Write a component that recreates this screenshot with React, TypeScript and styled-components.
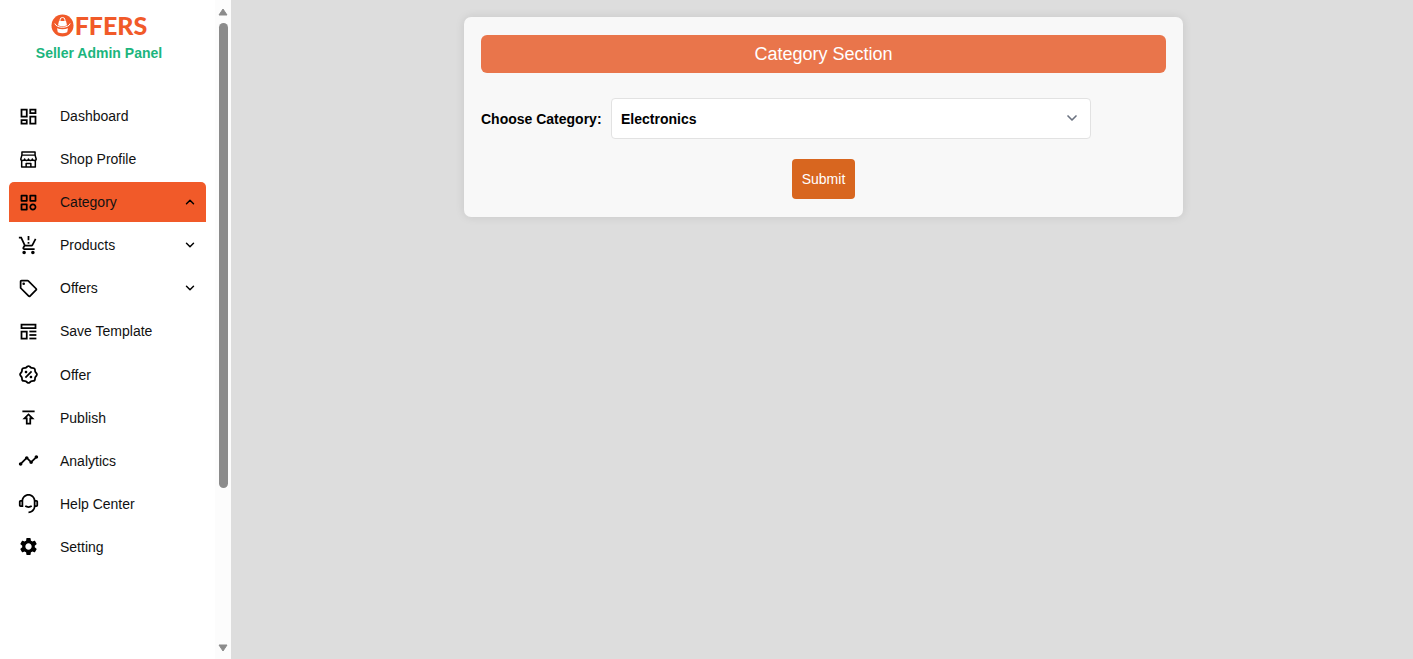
import React from "react";
import styled, { createGlobalStyle } from "styled-components";
import {
  MdOutlineDashboard,
  MdOutlineLocalOffer,
  MdOutlinePublish,
  MdProductionQuantityLimits,
  MdSettings,
  MdTimeline,
} from "react-icons/md";
import { BiCategory } from "react-icons/bi";
import { CgTemplate } from "react-icons/cg";
import { RiCustomerService2Line, RiDiscountPercentLine } from "react-icons/ri";
import { ChevronDown, ChevronUp } from "lucide-react";

const GlobalStyle = createGlobalStyle`
  *, *::before, *::after { box-sizing: border-box; }
  body {
    margin: 0;
    background: #dddddd;
    color: #111111;
    font-family: "Liberation Sans", Arial, sans-serif;
    font-size: 14px;
  }
  button, select { font: inherit; }
`;

const Layout = styled.div`
  display: flex;
  min-height: 100vh;
`;

const Sidebar = styled.aside`
  display: flex;
  flex: 0 0 231px;
  height: 100vh;
  background: #ffffff;
`;

const SidebarContent = styled.div`
  flex: 1;
  padding: 13px 9px 0;
`;

const Brand = styled.header`
  display: flex;
  flex-direction: column;
  align-items: center;
  padding-right: 17px;
  margin-bottom: 34px;
`;

const Logo = styled.div`
  display: flex;
  align-items: center;
  gap: 1px;
  height: 25px;
  color: #f15a29;
  font: 900 25px/25px Lato, sans-serif;
`;

const BrandTitle = styled.h1`
  margin: 6px 0 0;
  color: #1bb57d;
  font-size: 14px;
  line-height: 18px;
`;

const Menu = styled.ul`
  display: flex;
  flex-direction: column;
  justify-content: space-between;
  min-height: 471px;
  margin: 0;
  padding: 0;
  list-style: none;
`;

const MenuLink = styled.a<{ $active?: boolean }>`
  display: flex;
  align-items: center;
  gap: 21px;
  height: 40px;
  padding: 0 9px;
  border-radius: 5px 5px 0 0;
  background: ${({ $active }) => ($active ? "#f15a29" : "transparent")};
  color: inherit;
  text-decoration: none;

  svg {
    flex: none;
    color: #000000;
  }
`;

const MenuLabel = styled.span`
  flex: 1;
`;

const ScrollBar = styled.div`
  display: flex;
  flex-direction: column;
  align-items: center;
  flex: 0 0 16px;
  padding: 8px 0 7px;
  background: #fcfcfc;
`;

const ScrollTrack = styled.div`
  flex: 1;
  width: 9px;
  margin: 7px 0 5px;
`;

const ScrollThumb = styled.div`
  height: 75.5%;
  border-radius: 5px;
  background: #8b8b8b;
`;

const Main = styled.main`
  flex: 1;
  min-width: 0;
  padding: 17px 16px 17px 19px;
`;

const Card = styled.form`
  display: flex;
  flex-direction: column;
  max-width: 719px;
  margin: 0 auto;
  padding: 18px 17px;
  border-radius: 7px;
  background: #f8f8f8;
  box-shadow: 0 0 10px rgba(0, 0, 0, 0.1);
`;

const CardTitle = styled.h2`
  margin: 0 0 25px;
  border-radius: 6px;
  background: #e9754b;
  color: #ffffff;
  font-size: 18px;
  font-weight: 400;
  line-height: 38px;
  text-align: center;
`;

const Field = styled.div`
  display: flex;
  align-items: center;
  margin-bottom: 20px;
`;

const FieldLabel = styled.label`
  flex: 0 0 130px;
  color: #000000;
  font-weight: 700;
`;

const SelectBox = styled.div`
  position: relative;
  width: 70%;

  svg {
    position: absolute;
    top: 12px;
    right: 11px;
    color: #6b7280;
    pointer-events: none;
  }
`;

const Select = styled.select`
  width: 100%;
  height: 41px;
  padding: 0 9px;
  border: 1px solid #e2e2e2;
  border-radius: 4px;
  background: #ffffff;
  color: #000000;
  font-weight: 700;
  appearance: none;
`;

const SubmitButton = styled.button`
  align-self: center;
  height: 40px;
  padding: 0 10px;
  border: 0;
  border-radius: 4px;
  background: #d8661f;
  color: #ffffff;
`;

function LogoMark() {
  return (
    <svg width="23" height="23" viewBox="0 0 23 23" aria-hidden="true">
      <circle cx="11.5" cy="11.5" r="11" fill="currentColor" />
      <path d="M9 7V6a2.500 2.500 0 0 1 5 0v1" fill="none" stroke="#fff" />
      <path d="M8 7h7l1 4.200c-2.800 1.300-6.200 1.300-9 0z" fill="#fff" />
      <path d="M3.800 9.500c1.600 5 13.800 5 15.400 0" fill="none" stroke="#fff" />
      <path d="M6 14.200c3.400 1.400 7.600 1.400 11 0l-.8 4c-3 1.300-6.400 1.300-9.400 0z" fill="#fff" />
    </svg>
  );
}

function ShopIcon({ size = 22 }: { size?: number }) {
  return (
    <svg
      width={size}
      height={size}
      viewBox="0 0 24 24"
      fill="none"
      stroke="currentColor"
      strokeWidth="1.7"
      strokeLinejoin="round"
    >
      <path d="M4.500 3.500h15v3.500h-15z" />
      <path d="M4.500 7L3.200 11.500c0 2.200 4.400 2.200 4.400 0c0 2.200 4.400 2.200 4.400 0c0 2.200 4.400 2.200 4.400 0c0 2.200 4.400 2.200 4.400 0L19.500 7" />
      <path d="M4.200 13v7.500h15.600v-7.500M9.300 20.500v-4h5.400v4" />
    </svg>
  );
}

const menuItems = [
  { label: "Dashboard", Icon: MdOutlineDashboard },
  { label: "Shop Profile", Icon: ShopIcon },
  { label: "Category", Icon: BiCategory, Arrow: ChevronUp, active: true },
  { label: "Products", Icon: MdProductionQuantityLimits, Arrow: ChevronDown },
  { label: "Offers", Icon: MdOutlineLocalOffer, Arrow: ChevronDown },
  { label: "Save Template", Icon: CgTemplate },
  { label: "Offer", Icon: RiDiscountPercentLine },
  { label: "Publish", Icon: MdOutlinePublish },
  { label: "Analytics", Icon: MdTimeline },
  { label: "Help Center", Icon: RiCustomerService2Line },
  { label: "Setting", Icon: MdSettings },
];

export default function App() {
  return (
    <Layout>
      <GlobalStyle />
      <Sidebar>
        <SidebarContent>
          <Brand>
            <Logo>
              <LogoMark />
              <span>FFERS</span>
            </Logo>
            <BrandTitle>Seller Admin Panel</BrandTitle>
          </Brand>
          <nav>
            <Menu>
              {menuItems.map(({ label, Icon, Arrow, active }) => (
                <li key={label}>
                  <MenuLink href="#" $active={active}>
                    <Icon size={21} />
                    <MenuLabel>{label}</MenuLabel>
                    {Arrow && <Arrow size={14} strokeWidth={2.500} />}
                  </MenuLink>
                </li>
              ))}
            </Menu>
          </nav>
        </SidebarContent>
        <ScrollBar aria-hidden="true">
          <svg width="10" height="8" viewBox="0 0 10 8">
            <path d="M5 1L9 7H1z" fill="#8b8b8b" stroke="#8b8b8b" strokeLinejoin="round" />
          </svg>
          <ScrollTrack>
            <ScrollThumb />
          </ScrollTrack>
          <svg width="10" height="8" viewBox="0 0 10 8">
            <path d="M5 7L9 1H1z" fill="#8b8b8b" stroke="#8b8b8b" strokeLinejoin="round" />
          </svg>
        </ScrollBar>
      </Sidebar>
      <Main>
        <Card>
          <CardTitle>Category Section</CardTitle>
          <Field>
            <FieldLabel htmlFor="category">Choose Category:</FieldLabel>
            <SelectBox>
              <Select id="category" defaultValue="Electronics">
                <option>Electronics</option>
              </Select>
              <ChevronDown size={16} strokeWidth={2.500} />
            </SelectBox>
          </Field>
          <SubmitButton type="button">Submit</SubmitButton>
        </Card>
      </Main>
    </Layout>
  );
}
